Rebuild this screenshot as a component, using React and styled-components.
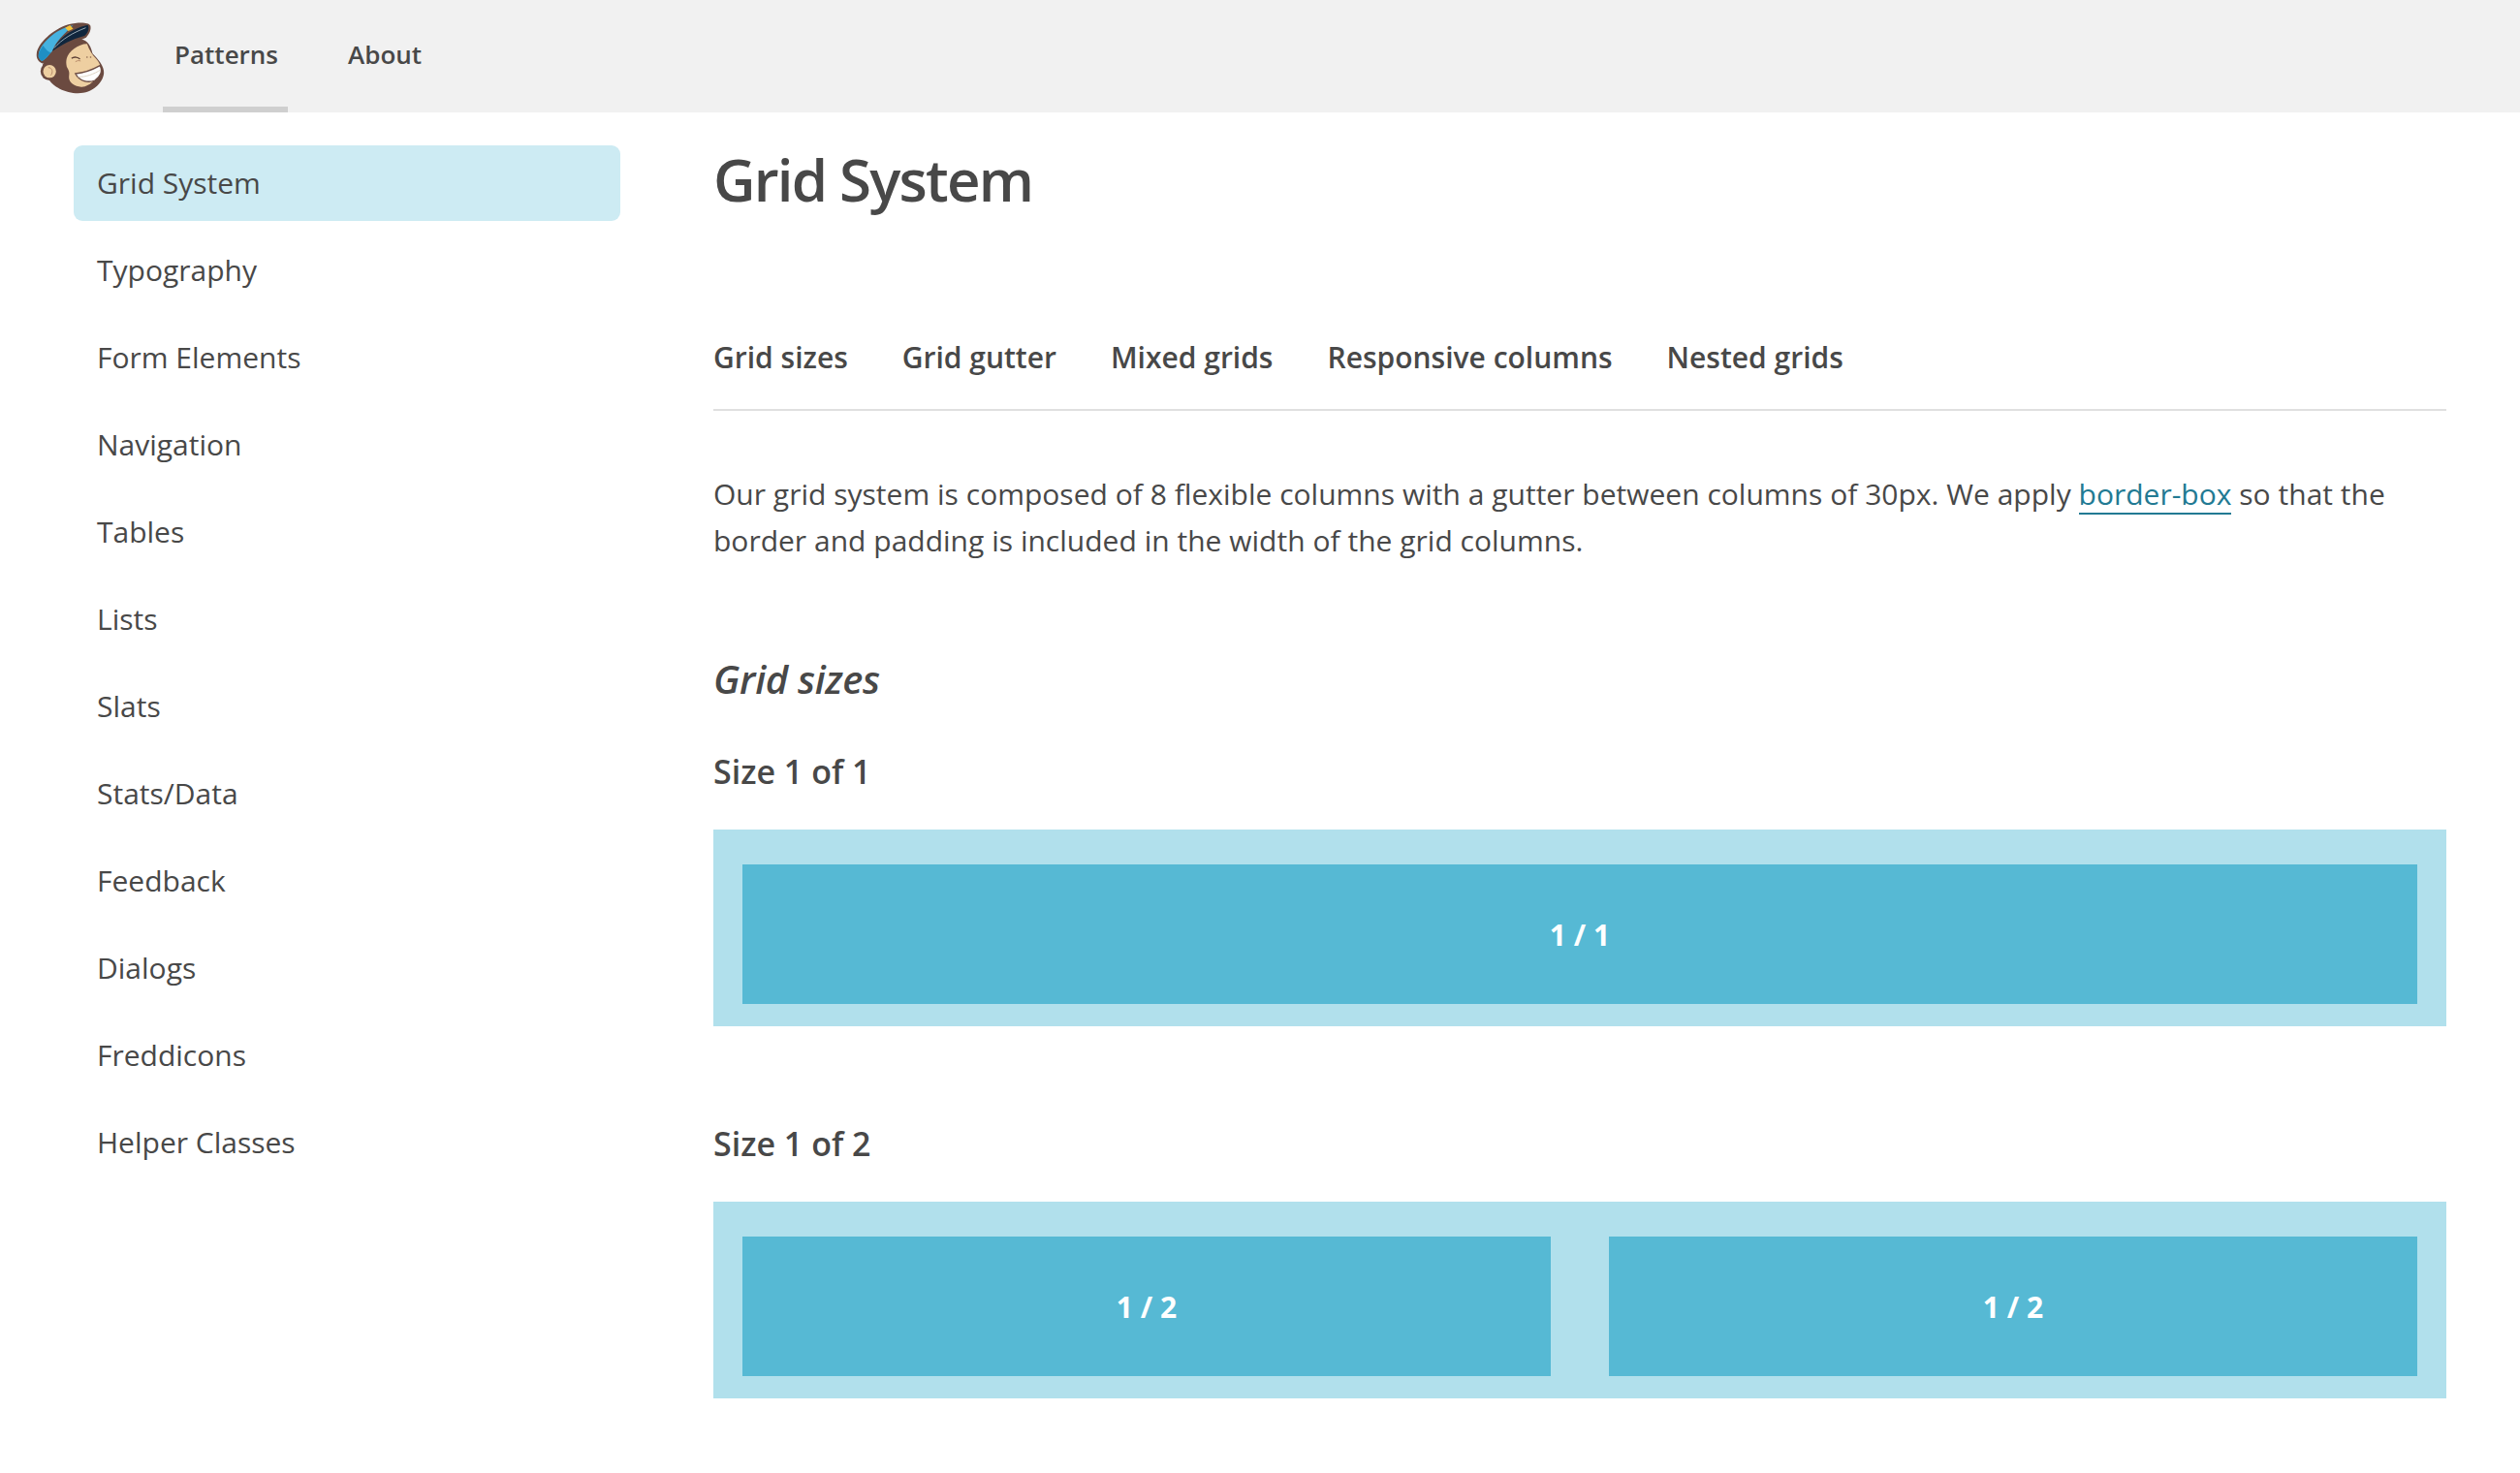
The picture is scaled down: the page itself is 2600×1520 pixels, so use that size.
import React from 'react';
import styled, { createGlobalStyle } from 'styled-components';

const GlobalStyle = createGlobalStyle`
  html, body { margin: 0; padding: 0; background: #fff; }
  body {
    font-family: "Open Sans", "Liberation Sans", sans-serif;
    color: #484848;
    font-size: 30px;
    line-height: 48px;
  }
  * { box-sizing: border-box; }
`;

const sideItems = ['Grid System', 'Typography', 'Form Elements', 'Navigation', 'Tables', 'Lists', 'Slats', 'Stats/Data', 'Feedback', 'Dialogs', 'Freddicons', 'Helper Classes'];
const jumpLinks = ['Grid sizes', 'Grid gutter', 'Mixed grids', 'Responsive columns', 'Nested grids'];

const Logo = () => (
  <LogoBox width="72" height="76" viewBox="50 35 215 228">
    <path d="M70 175 C72 150 110 115 165 95 C190 85 215 90 225 135 C240 150 262 175 260 195 C258 225 225 258 180 258 C140 258 100 235 90 215 C78 205 70 190 70 175 Z" fill="#6b4a40" />
    <path d="M52 135 C55 105 100 60 150 45 C180 37 212 37 218 48 C222 60 215 75 205 85 L100 135 C90 145 78 168 68 165 C58 160 50 150 52 135 Z" fill="#6b4a40" />
    <path d="M58 138 C60 110 100 68 150 51 L165 48 C140 70 110 100 100 128 C88 140 78 155 68 158 C60 152 56 146 58 138 Z" fill="#45b2e0" />
    <path d="M58 138 C60 128 66 118 72 110 C80 122 88 130 96 132 C88 140 78 155 68 158 C60 152 56 146 58 138 Z" fill="#1f8fc4" />
    <path d="M100 128 C115 95 150 60 210 46 C216 55 212 70 200 80 C160 90 125 110 100 128 Z" fill="#10263d" />
    <path d="M106 118 C130 90 165 70 204 55" stroke="#d9e6ec" strokeWidth="2" fill="none" />
    <path d="M140 55 L155 47 L165 58 L150 65 Z" fill="#f5c33b" />
    <circle cx="92" cy="190" r="28" fill="#6b4a40" />
    <circle cx="92" cy="190" r="20" fill="#eecfa1" />
    <path d="M88 178 C100 178 104 192 96 202" stroke="#b98d6b" strokeWidth="3" fill="none" />
    <path d="M145 150 C150 130 180 105 208 105 C215 125 225 140 235 150 C248 165 252 178 250 185 C248 205 215 240 190 238 C170 236 150 225 152 205 C155 190 150 185 145 175 C143 165 143 158 145 150 Z" fill="#eecfa1" />
    <path d="M160 150 C168 143 180 146 186 152" stroke="#5a3d33" strokeWidth="4" fill="none" />
    <path d="M172 160 C178 156 184 156 188 158" stroke="#b98d6b" strokeWidth="3" fill="none" />
    <circle cx="208" cy="146" r="2.5" fill="#8a6650" />
    <circle cx="219" cy="146" r="2.5" fill="#8a6650" />
    <path d="M172 197 C195 195 225 185 248 172 C258 190 248 208 232 218 C212 226 185 222 172 197 Z" fill="#fff" stroke="#6b4a40" strokeWidth="4" />
    <path d="M180 207 C205 208 230 198 250 185" stroke="#e0d6c6" strokeWidth="3" fill="none" />
  </LogoBox>
);

export default function App() {
  return (
    <>
      <GlobalStyle />
      <Header>
        <Logo />
        <TopNav>
          <TopLink $active>Patterns</TopLink>
          <TopLink>About</TopLink>
        </TopNav>
      </Header>
      <Page>
        <Sidebar>
          {sideItems.map((item, i) => (
            <SideItem key={item} $active={i === 0}>{item}</SideItem>
          ))}
        </Sidebar>
        <Main>
          <Title>Grid System</Title>
          <JumpNav>
            {jumpLinks.map((item) => <JumpLink key={item}>{item}</JumpLink>)}
          </JumpNav>
          <Intro>
            Our grid system is composed of 8 flexible columns with a gutter between columns of 30px. We apply <DocLink>border-box</DocLink> so that the border and padding is included in the width of the grid columns.
          </Intro>
          <SectionTitle>Grid sizes</SectionTitle>
          <SizeTitle>Size 1 of 1</SizeTitle>
          <GridDemo>
            <GridCell>1 / 1</GridCell>
          </GridDemo>
          <SizeTitle $spaced>Size 1 of 2</SizeTitle>
          <GridDemo>
            <GridCell>1 / 2</GridCell>
            <GridCell>1 / 2</GridCell>
          </GridDemo>
        </Main>
      </Page>
    </>
  );
}

const Header = styled.header`
  display: flex;
  height: 116px;
  background: #f1f1f1;
  padding-left: 37px;
`;

const LogoBox = styled.svg`
  margin-top: 22px;
  flex: none;
`;

const TopNav = styled.nav`
  display: flex;
  margin-left: 59px;
  gap: 50px;
`;

const TopLink = styled.a`
  display: block;
  height: 116px;
  padding: 32px 10px 0 12px;
  font-size: 26px;
  font-weight: 600;
  border-bottom: 6px solid ${(p) => (p.$active ? '#cfcfcf' : 'transparent')};
`;

const Page = styled.div`
  display: flex;
  padding-right: 76px;
`;

const Sidebar = styled.aside`
  width: 564px;
  margin: 34px 96px 0 76px;
  flex: none;
  display: flex;
  flex-direction: column;
  gap: 12px;
`;

const SideItem = styled.a`
  display: block;
  height: 78px;
  line-height: 78px;
  padding-left: 24px;
  border-radius: 9px;
  background: ${(p) => (p.$active ? '#cdebf3' : 'transparent')};
`;

const Main = styled.main`
  flex: 1;
  min-width: 0;
`;

const Title = styled.h1`
  margin: 33px 0 0;
  font-size: 60px;
  line-height: 72px;
  font-weight: 600;
  letter-spacing: -1.8px;
`;

const JumpNav = styled.nav`
  display: flex;
  gap: 56px;
  margin-top: 124px;
  padding-bottom: 29px;
  border-bottom: 2px solid #e0e0e0;
`;

const JumpLink = styled.a`
  font-weight: 600;
  line-height: 48px;
`;

const Intro = styled.p`
  margin: 62px 0 0;
  word-spacing: 0.08px;
`;

const DocLink = styled.a`
  display: inline-block;
  line-height: 38px;
  color: #227a93;
  border-bottom: 2px solid #227a93;
`;

const SectionTitle = styled.h2`
  margin: 95px 0 0;
  font-size: 40px;
  line-height: 48px;
  font-weight: 600;
  font-style: italic;
  letter-spacing: -0.3px;
`;

const SizeTitle = styled.h3`
  margin: ${(p) => (p.$spaced ? '97px' : '47px')} 0 0;
  font-size: 34px;
  line-height: 48px;
  font-weight: 600;
`;

const GridDemo = styled.div`
  display: flex;
  gap: 60px;
  margin-top: 36px;
  padding: 36px 30px 23px;
  background: #b1e0ec;
`;

const GridCell = styled.div`
  flex: 1;
  height: 144px;
  line-height: 146px;
  text-align: center;
  background: #56b9d4;
  color: #fff;
  font-weight: 700;
`;
